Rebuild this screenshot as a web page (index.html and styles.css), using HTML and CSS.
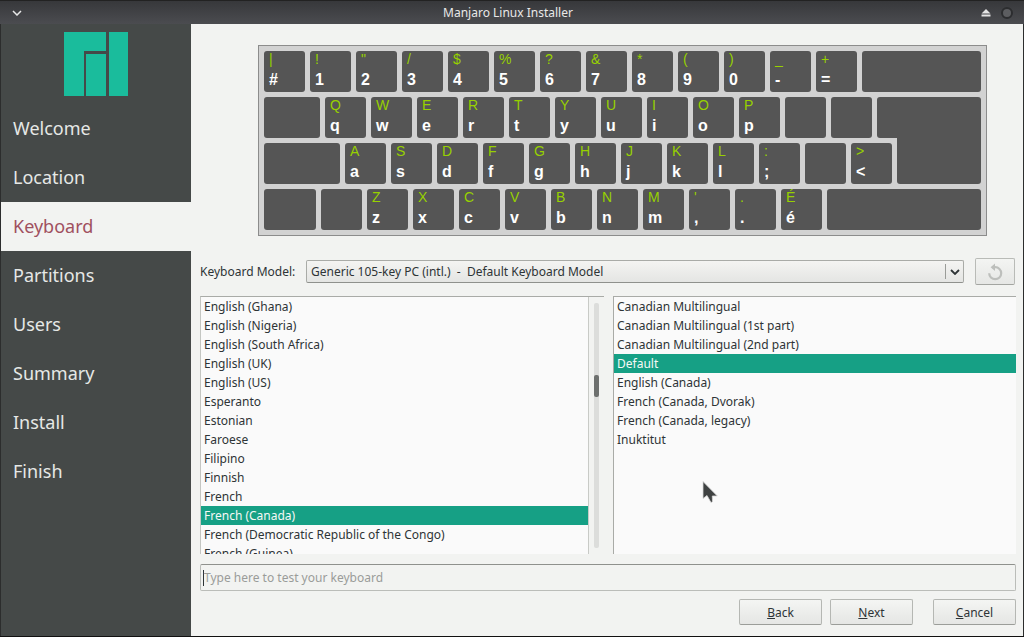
FILE: index.html
```html
<!DOCTYPE html>
<html lang="en">
<head>
    <meta charset="UTF-8">
    <meta name="viewport" content="width=device-width, initial-scale=1.0">
    <title>Manjaro Linux Installer</title>
    <link rel="stylesheet" href="styles.css">
</head>
<body>
    <div class="window">
        <!-- Title bar -->
        <div class="titlebar">
            <svg class="menu-icon" width="10" height="6" viewBox="0 0 10 6"><path d="M1 1l4 4 4-4" fill="none" stroke="#e8e8e8" stroke-width="1.5"/></svg>
            <div class="title">Manjaro Linux Installer</div>
            <svg class="eject-icon" width="10" height="8" viewBox="0 0 10 8"><path d="M5 0l4.5 4.5h-9z M0.5 5.5h9v2h-9z" fill="#e4e4e4"/></svg>
            <div class="close-icon"></div>
        </div>

        <div class="content">
            <!-- Sidebar -->
            <div class="sidebar">
                <svg class="logo" width="64" height="64" viewBox="0 0 64 64">
                    <path d="M0 0h42v19h-22v45h-20z M22 22h20v42h-20z M45 0h19v64h-19z" fill="#1abc9c"/>
                </svg>
                <div class="step">Welcome</div>
                <div class="step">Location</div>
                <div class="step active">Keyboard</div>
                <div class="step">Partitions</div>
                <div class="step">Users</div>
                <div class="step">Summary</div>
                <div class="step">Install</div>
                <div class="step">Finish</div>
            </div>

            <!-- Main page -->
            <div class="main">
                <div class="keyboard">
                    <div class="key-row">
                        <div class="key"><span class="up">|</span><span class="low">#</span></div>
                        <div class="key"><span class="up">!</span><span class="low">1</span></div>
                        <div class="key"><span class="up">"</span><span class="low">2</span></div>
                        <div class="key"><span class="up">/</span><span class="low">3</span></div>
                        <div class="key"><span class="up">$</span><span class="low">4</span></div>
                        <div class="key"><span class="up">%</span><span class="low">5</span></div>
                        <div class="key"><span class="up">?</span><span class="low">6</span></div>
                        <div class="key"><span class="up">&amp;</span><span class="low">7</span></div>
                        <div class="key"><span class="up">*</span><span class="low">8</span></div>
                        <div class="key"><span class="up">(</span><span class="low">9</span></div>
                        <div class="key"><span class="up">)</span><span class="low">0</span></div>
                        <div class="key"><span class="up">_</span><span class="low">-</span></div>
                        <div class="key"><span class="up">+</span><span class="low">=</span></div>
                        <div class="key grow"></div>
                    </div>
                    <div class="key-row">
                        <div class="key tab"></div>
                        <div class="key"><span class="up">Q</span><span class="low">q</span></div>
                        <div class="key"><span class="up">W</span><span class="low">w</span></div>
                        <div class="key"><span class="up">E</span><span class="low">e</span></div>
                        <div class="key"><span class="up">R</span><span class="low">r</span></div>
                        <div class="key"><span class="up">T</span><span class="low">t</span></div>
                        <div class="key"><span class="up">Y</span><span class="low">y</span></div>
                        <div class="key"><span class="up">U</span><span class="low">u</span></div>
                        <div class="key"><span class="up">I</span><span class="low">i</span></div>
                        <div class="key"><span class="up">O</span><span class="low">o</span></div>
                        <div class="key"><span class="up">P</span><span class="low">p</span></div>
                        <div class="key"></div>
                        <div class="key"></div>
                        <div class="key grow enter-top"></div>
                    </div>
                    <div class="key-row">
                        <div class="key caps"></div>
                        <div class="key"><span class="up">A</span><span class="low">a</span></div>
                        <div class="key"><span class="up">S</span><span class="low">s</span></div>
                        <div class="key"><span class="up">D</span><span class="low">d</span></div>
                        <div class="key"><span class="up">F</span><span class="low">f</span></div>
                        <div class="key"><span class="up">G</span><span class="low">g</span></div>
                        <div class="key"><span class="up">H</span><span class="low">h</span></div>
                        <div class="key"><span class="up">J</span><span class="low">j</span></div>
                        <div class="key"><span class="up">K</span><span class="low">k</span></div>
                        <div class="key"><span class="up">L</span><span class="low">l</span></div>
                        <div class="key"><span class="up">:</span><span class="low">;</span></div>
                        <div class="key"></div>
                        <div class="key"><span class="up">&gt;</span><span class="low">&lt;</span></div>
                        <div class="key grow enter-bottom"></div>
                    </div>
                    <div class="key-row">
                        <div class="key shift"></div>
                        <div class="key"></div>
                        <div class="key"><span class="up">Z</span><span class="low">z</span></div>
                        <div class="key"><span class="up">X</span><span class="low">x</span></div>
                        <div class="key"><span class="up">C</span><span class="low">c</span></div>
                        <div class="key"><span class="up">V</span><span class="low">v</span></div>
                        <div class="key"><span class="up">B</span><span class="low">b</span></div>
                        <div class="key"><span class="up">N</span><span class="low">n</span></div>
                        <div class="key"><span class="up">M</span><span class="low">m</span></div>
                        <div class="key"><span class="up">'</span><span class="low">,</span></div>
                        <div class="key"><span class="up">.</span><span class="low">.</span></div>
                        <div class="key"><span class="up">É</span><span class="low">é</span></div>
                        <div class="key grow"></div>
                    </div>
                </div>

                <div class="model-row">
                    <label class="model-label">Keyboard Model:</label>
                    <div class="combo">
                        <span class="combo-text">Generic 105-key PC (intl.)&nbsp; -&nbsp; Default Keyboard Model</span>
                        <span class="combo-arrow">
                            <svg width="10" height="6" viewBox="0 0 10 6"><path d="M1 1l4 4 4-4" fill="none" stroke="#2e3436" stroke-width="1.8"/></svg>
                        </span>
                    </div>
                    <button class="reset-btn">
                        <svg width="18" height="18" viewBox="0 0 18 18"><path d="M6 4.2h3.2a6 6 0 1 1-6 6" fill="none" stroke="#bdbfbc" stroke-width="2.2"/><path d="M9 0.5v7.4l-4.4-3.7z" fill="#bdbfbc"/></svg>
                    </button>
                </div>

                <div class="lists">
                    <div class="list list-left">
                        <div class="list-items">
                            <div class="item">English (Ghana)</div>
                            <div class="item">English (Nigeria)</div>
                            <div class="item">English (South Africa)</div>
                            <div class="item">English (UK)</div>
                            <div class="item">English (US)</div>
                            <div class="item">Esperanto</div>
                            <div class="item">Estonian</div>
                            <div class="item">Faroese</div>
                            <div class="item">Filipino</div>
                            <div class="item">Finnish</div>
                            <div class="item">French</div>
                            <div class="item selected">French (Canada)</div>
                            <div class="item">French (Democratic Republic of the Congo)</div>
                            <div class="item">French (Guinea)</div>
                        </div>
                        <div class="scrollbar"><div class="trough"><div class="thumb"></div></div></div>
                    </div>
                    <div class="list list-right">
                        <div class="list-items">
                            <div class="item">Canadian Multilingual</div>
                            <div class="item">Canadian Multilingual (1st part)</div>
                            <div class="item">Canadian Multilingual (2nd part)</div>
                            <div class="item selected">Default</div>
                            <div class="item">English (Canada)</div>
                            <div class="item">French (Canada, Dvorak)</div>
                            <div class="item">French (Canada, legacy)</div>
                            <div class="item">Inuktitut</div>
                        </div>
                    </div>
                </div>

                <div class="test-input"><span class="caret"></span>Type here to test your keyboard</div>

                <div class="buttons">
                    <button class="btn"><u>B</u>ack</button>
                    <button class="btn"><u>N</u>ext</button>
                    <button class="btn btn-cancel"><u>C</u>ancel</button>
                </div>
            </div>
        </div>

        <!-- Mouse pointer -->
        <svg class="pointer" width="16" height="23" viewBox="0 0 16 23">
            <path d="M1 0.5v17l4-3 4 7 1.5-.8-.2-5.7h5z" fill="#3f4242" stroke="#d8d8d8" stroke-width="0.8"/>
        </svg>
    </div>
</body>
</html>
```

FILE: styles.css
```css
* {
    box-sizing: border-box;
}

body {
    margin: 0;
    font-family: "Noto Sans", sans-serif;
    font-size: 12px;
    color: #2e3436;
    background: #000;
}

.window {
    position: relative;
    width: 1024px;
    height: 637px;
    display: flex;
    flex-direction: column;
    border-bottom: 1px solid #111;
    background: #f2f3f1;
    overflow: hidden;
}

/* Title bar */
.titlebar {
    height: 24px;
    display: flex;
    align-items: center;
    padding: 0 11px 0 12px;
    border-top: 1px solid #222;
    background: linear-gradient(#37383b, #4b4c50);
    color: #e8e8e8;
}

.title {
    flex: 1;
    text-align: center;
    padding-left: 13px;
}

.eject-icon {
    margin-right: 10px;
}

.close-icon {
    width: 12px;
    height: 12px;
    border-radius: 50%;
    border: 2px solid #2c2d2f;
    background: #5c5d60;
}

.content {
    flex: 1;
    display: flex;
    min-height: 0;
    border-left: 1px solid #2c2d2d;
    border-right: 1px solid #2c2d2d;
}

/* Sidebar */
.sidebar {
    width: 190px;
    flex-shrink: 0;
    background: #454948;
    padding-top: 8px;
}

.logo {
    display: block;
    margin: 0 0 8px 63px;
}

.step {
    height: 49px;
    line-height: 49px;
    padding-left: 12px;
    font-size: 18px;
    color: #e6e8e6;
}

.step.active {
    background: #f2f3f1;
    color: #a0505f;
}

/* Main page */
.main {
    flex: 1;
    min-width: 0;
    display: flex;
    flex-direction: column;
    padding: 21px 7px 0 9px;
}

.keyboard {
    width: 729px;
    height: 191px;
    margin-left: 58px;
    padding: 5px;
    display: flex;
    flex-direction: column;
    gap: 5px;
    border: 1px solid #8c8c8c;
    background: #d2d2d2;
}

.key-row {
    display: flex;
    gap: 5px;
    height: 41px;
}

.key {
    position: relative;
    width: 41px;
    height: 41px;
    border-radius: 3px;
    background: #555;
    font-family: "Liberation Sans", sans-serif;
}

.key.grow {
    flex: 1;
}

.key.tab {
    width: 56px;
}

.key.caps {
    width: 76px;
}

.key.shift {
    width: 52px;
}

.key.enter-top {
    border-bottom-right-radius: 0;
}

.key.enter-bottom {
    border-top-right-radius: 0;
    border-top-left-radius: 0;
}

/* joins the two halves of the enter key */
.key.enter-bottom::before {
    content: "";
    position: absolute;
    left: 0;
    right: 0;
    top: -8px;
    height: 8px;
    background: #555;
}

.up {
    position: absolute;
    left: 5px;
    top: 0;
    font-size: 14px;
    line-height: 16px;
    color: #97d100;
}

.low {
    position: absolute;
    left: 5px;
    top: 19px;
    font-size: 16px;
    line-height: 19px;
    font-weight: bold;
    color: #fff;
}

/* Keyboard model row */
.model-row {
    display: flex;
    align-items: center;
    height: 27px;
    margin-top: 22px;
}

.model-label {
    width: 106px;
}

.combo {
    width: 658px;
    height: 23px;
    display: flex;
    align-items: center;
    padding-left: 4px;
    border: 1px solid #a9aba7;
    border-bottom-color: #8f918d;
    border-radius: 2px;
    background: linear-gradient(#f4f4f2, #e4e5e3);
}

.combo-text {
    flex: 1;
}

.combo-arrow {
    width: 18px;
    height: 15px;
    display: flex;
    align-items: center;
    justify-content: center;
    border-left: 1px solid #9a9c98;
}

.reset-btn {
    width: 40px;
    height: 27px;
    margin-left: 11px;
    padding: 1px 0 0;
    display: flex;
    align-items: center;
    justify-content: center;
    border: 1px solid #b9bbb7;
    border-bottom-color: #a3a5a1;
    border-radius: 2px;
    background: linear-gradient(#f3f4f2, #e6e7e5);
}

/* Lists */
.lists {
    display: flex;
    gap: 9px;
    height: 258px;
    margin-top: 11px;
}

.list {
    display: flex;
    overflow: hidden;
    border-top: 1px solid #a9aba7;
    background: #fafafa;
}

.list-left {
    width: 404px;
    border-left: 1px solid #c4c6c2;
}

.list-right {
    width: 403px;
    border-left: 1px solid #a9aba7;
}

.list-items {
    flex: 1;
    min-width: 0;
}

.item {
    height: 19px;
    line-height: 19px;
    padding-left: 3px;
    white-space: nowrap;
}

.item.selected {
    background: #16a085;
    color: #f6f8f6;
}

.scrollbar {
    width: 16px;
    padding: 6px 5px;
    border-left: 1px solid #c8cac6;
    background: #f2f3f1;
}

.trough {
    height: 100%;
    padding-top: 72px;
    border-radius: 2px;
    background: #dcdddb;
}

.thumb {
    height: 22px;
    border-radius: 2px;
    background: #6d706e;
}

/* Test input */
.test-input {
    display: flex;
    align-items: center;
    height: 27px;
    margin-top: 10px;
    padding-left: 2px;
    border: 1px solid #bbbdb9;
    border-top-color: #8f918d;
    border-radius: 2px;
    color: #9a9c99;
    background: #f2f3f1;
}

.caret {
    width: 1px;
    height: 16px;
    margin-right: 0;
    background: #2e3436;
}

/* Bottom buttons */
.buttons {
    display: flex;
    justify-content: flex-end;
    gap: 8px;
    margin-top: 8px;
}

.btn {
    width: 83px;
    height: 26px;
    padding: 0;
    font: inherit;
    color: #2e3436;
    border: 1px solid #b5b7b3;
    border-bottom-color: #9b9d99;
    border-radius: 2px;
    background: linear-gradient(#f4f5f3, #e5e6e4);
}

.btn-cancel {
    margin-left: 12px;
}

.pointer {
    position: absolute;
    left: 702px;
    top: 481px;
}
```
